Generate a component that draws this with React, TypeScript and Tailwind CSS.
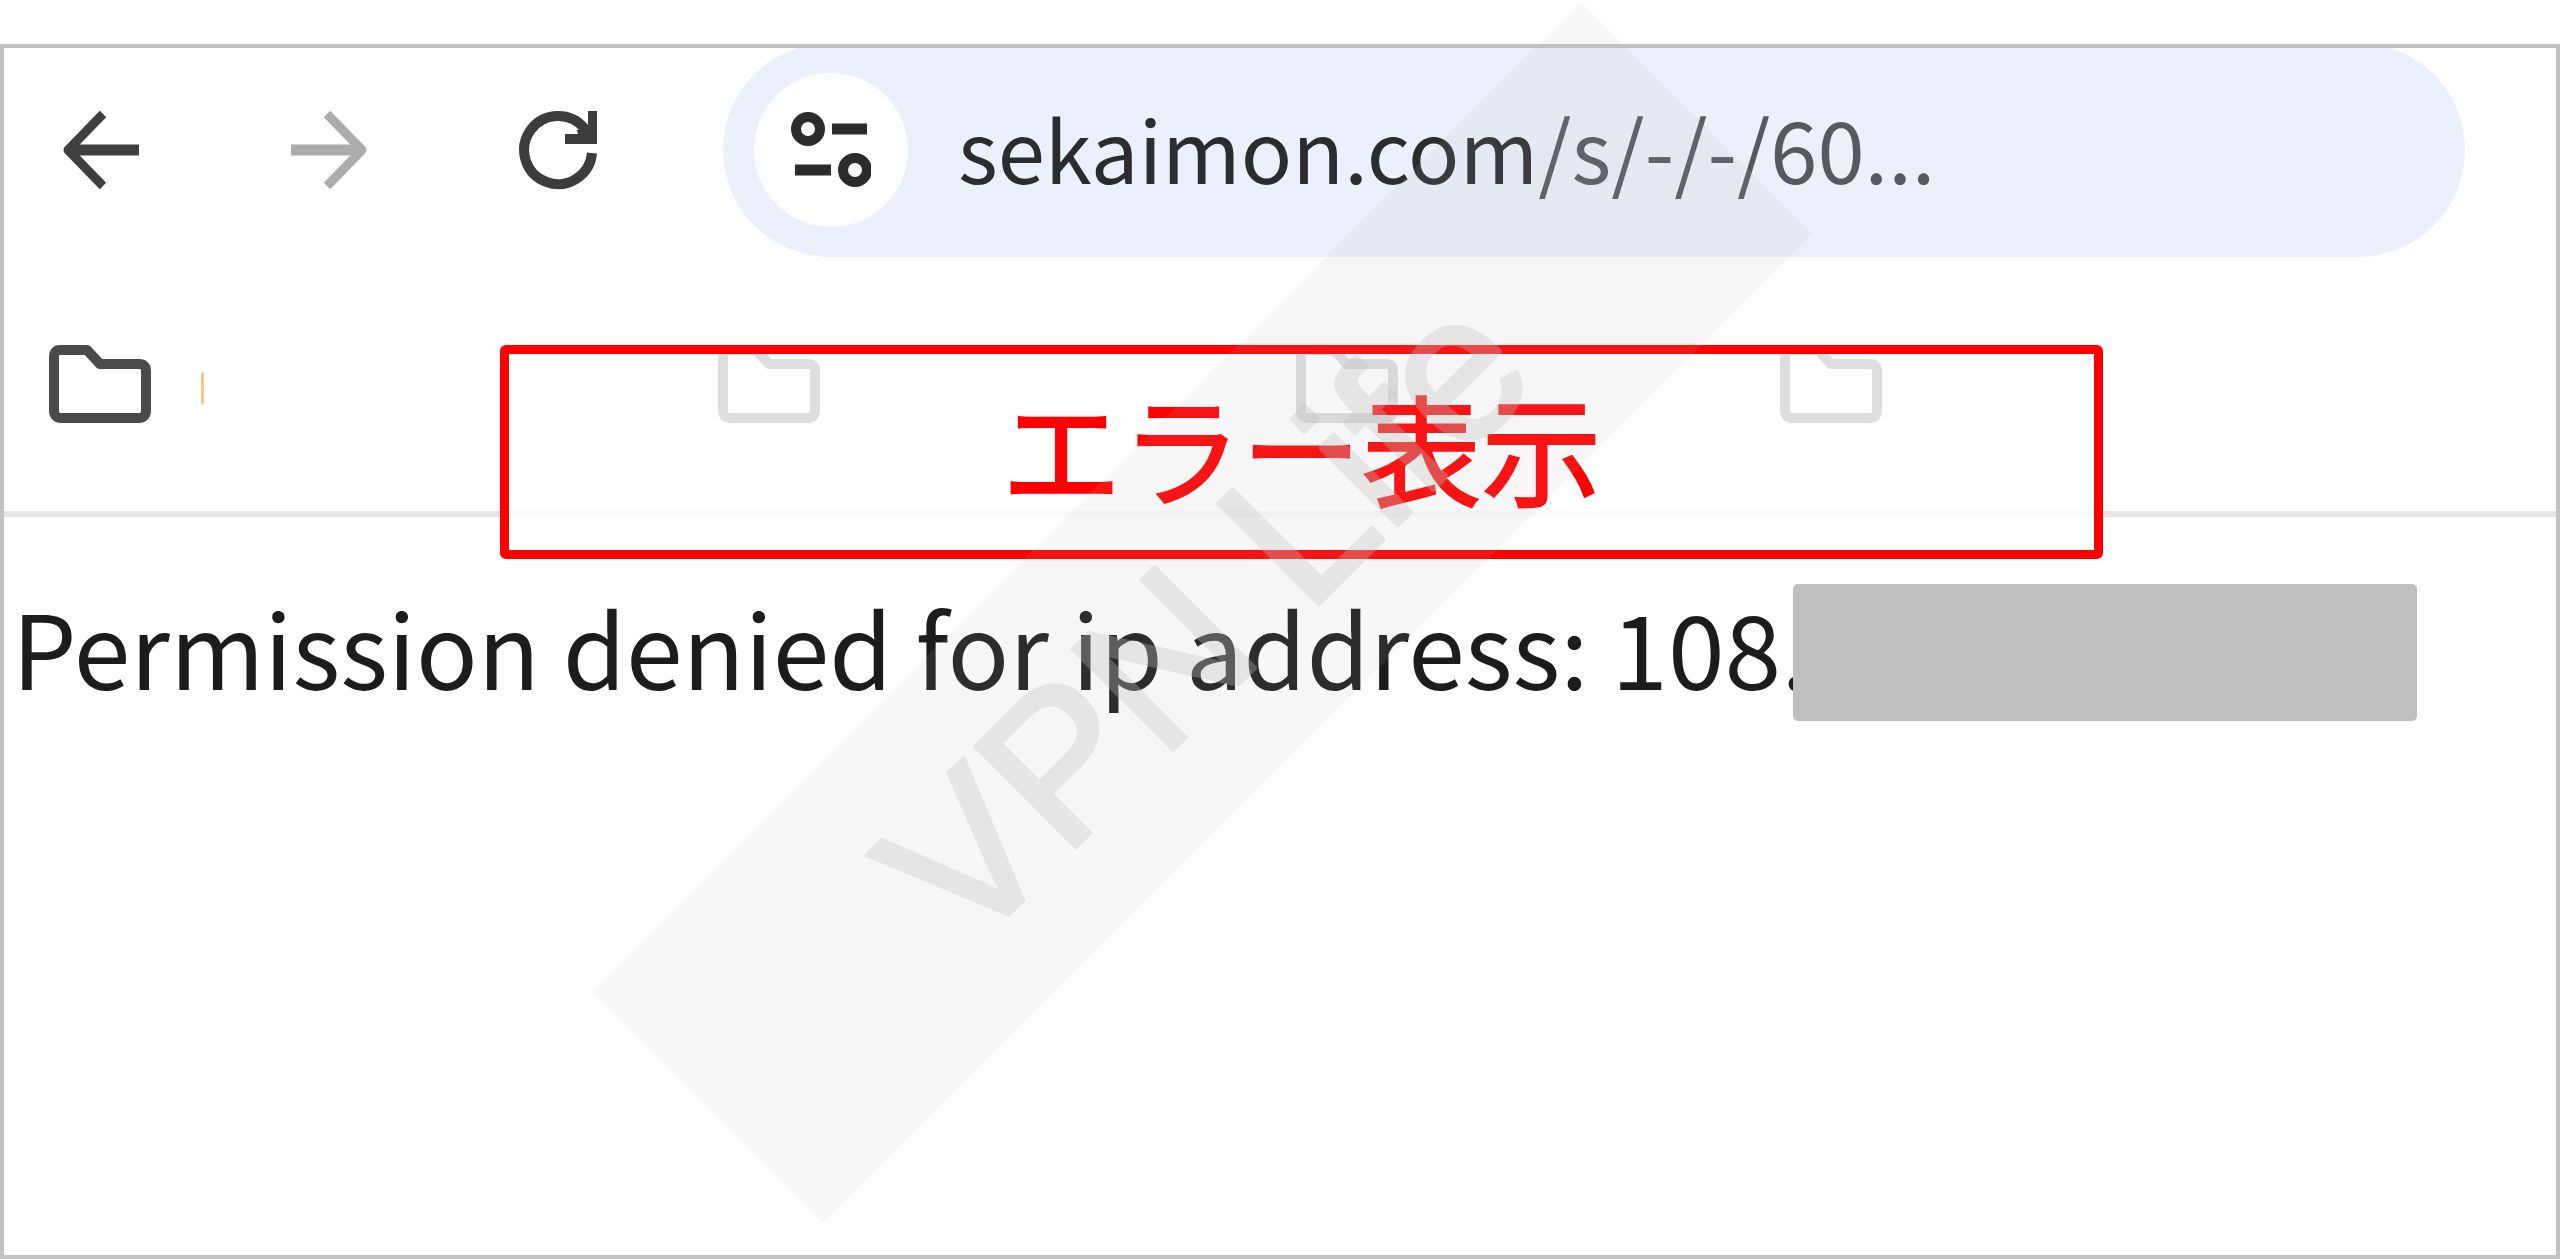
import React from "react";

const bookmarks = [
  { name: "Bookmarks folder 1", width: "w-[669px]", marker: true },
  { name: "Bookmarks folder 2", width: "w-[578px]", marker: false },
  { name: "Bookmarks folder 3", width: "w-[484px]", marker: false },
  { name: "Bookmarks folder 4", width: "w-[102px]", marker: false },
];

function ArrowIcon({ className }: { className: string }) {
  return (
    <svg viewBox="0 0 80 80" className={className} fill="none" stroke="currentColor" strokeWidth="9">
      <path d="M42 4 L7 40 L42 76" strokeLinejoin="round" />
      <path d="M10 40 H78" strokeWidth="11" />
    </svg>
  );
}

function ReloadIcon() {
  return (
    <svg viewBox="0 0 80 80" className="size-20 text-[#3c3c3c]" fill="none" stroke="currentColor">
      <path d="M75 43 A34 34 0 1 1 67 18 L73 26" strokeWidth="10" />
      <path d="M76 1 V29 H48" strokeWidth="10" />
      <path d="M60 20 L76 20 V30 H62 Z" fill="currentColor" stroke="none" />
    </svg>
  );
}

function TuneIcon() {
  return (
    <svg viewBox="0 0 80 80" className="size-20 text-[#2b2b2b]" fill="none" stroke="currentColor">
      <circle cx="17" cy="19" r="12" strokeWidth="10" />
      <path d="M41 19 H76" strokeWidth="11" />
      <path d="M4 60 H40" strokeWidth="11" />
      <circle cx="64" cy="60" r="12" strokeWidth="10" />
    </svg>
  );
}

function FolderIcon() {
  return (
    <svg viewBox="0 0 102 78" className="h-[78px] w-[102px] text-[#4a4a4a]" fill="none" stroke="currentColor">
      <path
        d="M11 5 H38 L51 19 H90 Q97 19 97 26 V65 Q97 73 90 73 H12 Q5 73 5 65 V12 Q5 5 11 5 Z"
        strokeWidth="10"
        strokeLinejoin="round"
      />
    </svg>
  );
}

// Diagonal band with the site name, laid over everything
function Watermark() {
  return (
    <div className="pointer-events-none absolute top-[449px] left-[502px] h-[328px] w-[1400px] -rotate-45 bg-[#b6b6b6]/11">
      <svg viewBox="0 0 1400 328" className="h-full w-full opacity-32" role="img" aria-label="VPN Life">
        <text
          x="698"
          y="240"
          textAnchor="middle"
          className="fill-[#c2c2c2] stroke-[#c2c2c2] font-['Liberation_Sans',sans-serif] text-[206px]"
          strokeWidth="5"
          strokeLinejoin="round"
        >
          VPN Life
        </text>
      </svg>
    </div>
  );
}

export default function App() {
  return (
    <div className="relative flex min-h-screen flex-col overflow-hidden bg-white pt-11 font-['Noto_Sans_CJK_JP',sans-serif]">
      <div className="flex flex-1 flex-col border-4 border-[#c3c3c3]">
        {/* toolbar */}
        <header className="flex h-[209px] items-end overflow-hidden pr-[91px] pl-[57px]">
          <nav className="flex h-[214px] shrink-0 items-center gap-[148px] pr-[126px]">
            <button aria-label="Back">
              <ArrowIcon className="size-20 text-[#3f3f3f]" />
            </button>
            <button aria-label="Forward">
              <ArrowIcon className="size-20 rotate-180 text-[#acacac]" />
            </button>
            <button aria-label="Reload">
              <ReloadIcon />
            </button>
          </nav>
          <div className="flex h-[214px] min-w-0 flex-1 items-center gap-[50px] rounded-full bg-[#ebf0fa] pl-[31px]">
            <button
              aria-label="Site information"
              className="flex size-[154px] shrink-0 items-center justify-center rounded-full bg-white"
            >
              <TuneIcon />
            </button>
            <input
              type="text"
              aria-label="Address"
              defaultValue="sekaimon.com/s/-/-/60..."
              className="h-32 min-w-0 flex-1 bg-[linear-gradient(90deg,#2a2c30_578px,#555a62_578px)] bg-clip-text pb-2 text-[85px] text-transparent outline-none"
            />
          </div>
        </header>

        {/* bookmarks bar */}
        <div className="flex h-[260px] items-center border-b-[6px] border-[#e5e5e5] pl-[45px]">
          {bookmarks.map((b) => (
            <button key={b.name} aria-label={b.name} className={`flex shrink-0 items-center gap-[50px] ${b.width}`}>
              <FolderIcon />
              {b.marker && <span className="mt-2 h-8 w-[3px] rounded-full bg-[#f5c987]" />}
            </button>
          ))}
        </div>

        <main className="flex pt-[67px] pl-2">
          <p className="text-[102px] leading-[124px] whitespace-nowrap text-[#1c1c1c]">
            Permission denied for ip address: 108.
          </p>
          <span className="relative -ml-[17px] h-[137px] w-[624px] shrink-0 rounded-[5px] bg-[#bfbfbf]" />
        </main>
      </div>

      {/* error callout */}
      <div className="absolute top-[345px] left-[500px] flex h-[214px] w-[1603px] items-center justify-center rounded-md border-[9px] border-[#fe0000] bg-white/82 pb-3">
        <span className="text-[120px] leading-none text-[#fe0000] [-webkit-text-stroke:2px_#fe0000]">エラー表示</span>
      </div>

      <Watermark />
    </div>
  );
}
